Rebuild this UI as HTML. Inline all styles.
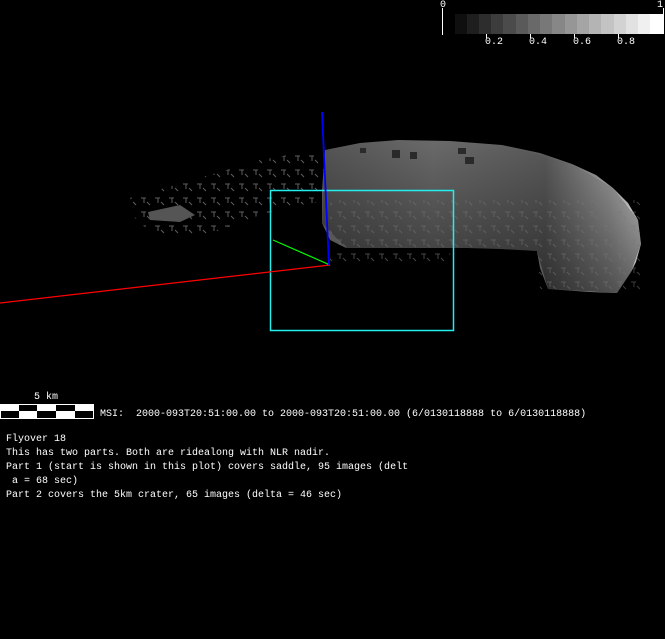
<!DOCTYPE html>
<html><head><meta charset="utf-8"><style>
html,body{margin:0;padding:0;background:#000;width:665px;height:639px;overflow:hidden}
.t{position:absolute;font-family:"Liberation Mono",monospace;font-size:10px;color:#fff;white-space:pre;line-height:14px}
</style></head><body>
<svg width="665" height="639" style="position:absolute;left:0;top:0" xmlns="http://www.w3.org/2000/svg">
<defs>
<linearGradient id="g" x1="0" y1="0" x2="1" y2="0">
<stop offset="0" stop-color="#555"/><stop offset="0.35" stop-color="#6a6a6a"/><stop offset="0.7" stop-color="#5a5a5a"/><stop offset="0.9" stop-color="#9a9a9a"/><stop offset="1" stop-color="#c8c8c8"/>
</linearGradient>
<linearGradient id="g2" x1="0" y1="0" x2="0" y2="1">
<stop offset="0" stop-color="#000" stop-opacity="0"/><stop offset="1" stop-color="#000" stop-opacity="0.5"/>
</linearGradient>
<pattern id="d" width="14" height="14" patternUnits="userSpaceOnUse"><path d="M1 2h5M4 2v5M10 9l-3-3" stroke="#777" stroke-width="1" fill="none"/></pattern>
</defs>
<!-- faint wing -->
<path d="M130 198 L175 185 L220 172 L260 160 L300 153 L325 150 L330 200 L300 205 L260 215 L220 230 L190 240 L150 232 L135 218 Z" fill="url(#d)" opacity="0.8"/>
<path d="M148 212 L180 205 L195 215 L180 222 L150 220 Z" fill="#555"/>
<!-- main body -->
<path d="M325 150 L360 143 L398 140 L450 141 L502 145 L540 153 L572 164 L596 175 L613 188 L628 203 L638 220 L641 244 L636 262 L631 272 L617 293 L590 292 L548 289 L540 268 L537 251 L500 249 L468 248 L400 248 L346 248 L330 240 L322 223 L322 190 Z" fill="url(#g)"/>
<path d="M325 150 L398 140 L502 145 L572 164 L613 188 L638 220 L641 244 L631 272 L617 293 L548 289 L537 251 L468 248 L346 248 L322 223 Z" fill="url(#g2)"/>
<path d="M330 200 L640 200 L640 290 L540 290 L537 251 L346 252 L330 240 Z" fill="url(#d)" opacity="0.5"/>
<path d="M330 248 L450 248 L450 262 L330 262 Z" fill="url(#d)" opacity="0.6"/>
<g fill="#2a2a2a"><rect x="392" y="150" width="8" height="8"/><rect x="410" y="152" width="7" height="7"/><rect x="465" y="157" width="9" height="7"/><rect x="458" y="148" width="8" height="6"/><rect x="360" y="148" width="6" height="5"/></g>
<!-- cyan box -->
<rect x="270.5" y="190.5" width="183" height="140" fill="none" stroke="#2ee" stroke-width="1.5"/>
<!-- axes -->
<line x1="0" y1="303" x2="330" y2="265" stroke="#f00" stroke-width="1.2"/>
<line x1="273" y1="240" x2="330" y2="265" stroke="#0f0" stroke-width="1.2"/>
<line x1="322" y1="112" x2="329" y2="265" stroke="#00f" stroke-width="1.8"/>
<!-- colorbar -->
<line x1="442.5" y1="8" x2="442.5" y2="35" stroke="#fff"/>
<line x1="663.5" y1="8" x2="663.5" y2="16" stroke="#fff"/>
<g>
<rect x="455" y="14" width="13" height="20" fill="#0f0f0f"/><rect x="467" y="14" width="13" height="20" fill="#1e1e1e"/><rect x="479" y="14" width="13" height="20" fill="#2d2d2d"/><rect x="491" y="14" width="13" height="20" fill="#3c3c3c"/><rect x="503" y="14" width="13" height="20" fill="#4b4b4b"/><rect x="516" y="14" width="13" height="20" fill="#5a5a5a"/><rect x="528" y="14" width="13" height="20" fill="#696969"/><rect x="540" y="14" width="13" height="20" fill="#787878"/><rect x="552" y="14" width="13" height="20" fill="#878787"/><rect x="565" y="14" width="13" height="20" fill="#969696"/><rect x="577" y="14" width="13" height="20" fill="#a5a5a5"/><rect x="589" y="14" width="13" height="20" fill="#b4b4b4"/><rect x="601" y="14" width="13" height="20" fill="#c3c3c3"/><rect x="614" y="14" width="13" height="20" fill="#d2d2d2"/><rect x="626" y="14" width="13" height="20" fill="#e1e1e1"/><rect x="638" y="14" width="13" height="20" fill="#f0f0f0"/><rect x="650" y="14" width="14" height="20" fill="#fff"/>
</g>
<g stroke="#fff"><line x1="486.5" y1="34" x2="486.5" y2="38"/><line x1="530.5" y1="34" x2="530.5" y2="38"/><line x1="574.5" y1="34" x2="574.5" y2="38"/><line x1="618.5" y1="34" x2="618.5" y2="38"/></g>
<!-- scale bar -->
<rect x="0.5" y="404.5" width="93" height="14" fill="#000" stroke="#fff"/>
<g fill="#fff"><rect x="0" y="405" width="19" height="6"/><rect x="37" y="405" width="19" height="6"/><rect x="75" y="405" width="19" height="6"/><rect x="19" y="411" width="18" height="7"/><rect x="56" y="411" width="19" height="7"/></g>
</svg>
<div class="t" style="left:440px;top:-1px">0</div>
<div class="t" style="left:657px;top:-1px">1</div>
<div class="t" style="left:485px;top:36px">0.2</div>
<div class="t" style="left:529px;top:36px">0.4</div>
<div class="t" style="left:573px;top:36px">0.6</div>
<div class="t" style="left:617px;top:36px">0.8</div>
<div class="t" style="left:34px;top:391px">5 km</div>
<div class="t" style="left:100px;top:408px">MSI:  2000-093T20:51:00.00 to 2000-093T20:51:00.00 (6/0130118888 to 6/0130118888)</div>
<div class="t" style="left:6px;top:433px">Flyover 18
This has two parts. Both are ridealong with NLR nadir.
Part 1 (start is shown in this plot) covers saddle, 95 images (delt
 a = 68 sec)
Part 2 covers the 5km crater, 65 images (delta = 46 sec)</div>
</body></html>
